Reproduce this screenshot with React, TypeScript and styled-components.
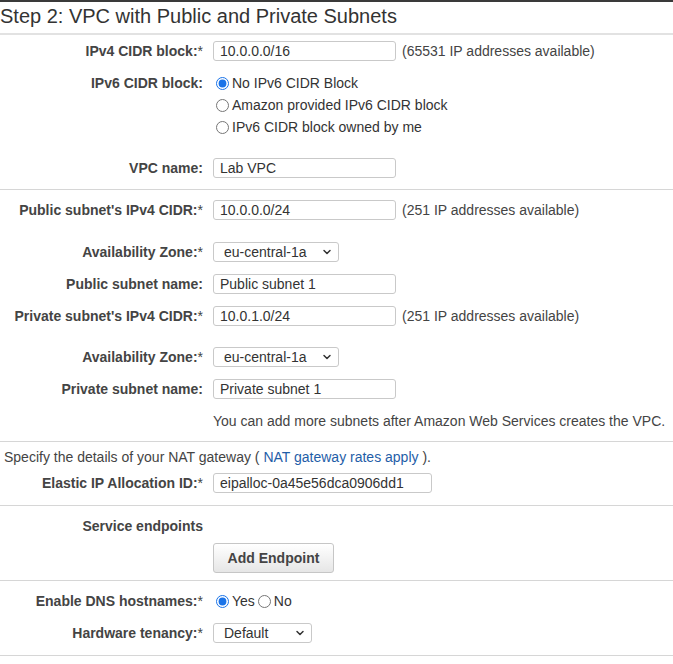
import React from "react";
import styled, { createGlobalStyle } from "styled-components";
import { ChevronDown } from "lucide-react";

const GlobalStyle = createGlobalStyle`
  html, body { margin: 0; padding: 0; background: #fff; }
  body {
    font-family: "Liberation Sans", Arial, sans-serif;
    font-size: 14px;
    color: #444;
  }
  * { box-sizing: border-box; }
`;

const Page = styled.div`
  width: 673px;
  border-top: 2px solid #3a3a3a;
`;

const Title = styled.h2`
  margin: 0;
  height: 33px;
  padding: 2px 0 0 0;
  font-size: 20px;
  font-weight: normal;
  line-height: 24px;
  color: #333;
  border-bottom: 2px solid #e2e2e2;
`;

const Section = styled.section<{ $pt?: number; $pb?: number }>`
  padding-top: ${(p) => p.$pt ?? 0}px;
  padding-bottom: ${(p) => p.$pb ?? 0}px;
  border-bottom: 1px solid #d6d6d6;
`;

const Row = styled.div<{ $h: number; $top?: boolean; $mt?: number }>`
  display: grid;
  grid-template-columns: 213px 1fr;
  align-items: ${(p) => (p.$top ? "start" : "center")};
  height: ${(p) => p.$h}px;
  margin-top: ${(p) => p.$mt ?? 0}px;
`;

const Label = styled.label`
  text-align: right;
  padding-right: 10px;
  font-weight: bold;
  white-space: nowrap;
  color: #444;
  line-height: 22px;
`;

const Star = styled.span`
  font-weight: normal;
`;

const Field = styled.div`
  display: flex;
  align-items: center;
  gap: 6px;
  white-space: nowrap;
`;

const TextInput = styled.input<{ $w: number }>`
  width: ${(p) => p.$w}px;
  height: 20px;
  border: 1px solid #c9c9c9;
  border-radius: 3px;
  padding: 0 6px;
  font-family: "Liberation Sans", Arial, sans-serif;
  font-size: 14px;
  color: #333;
  background: #fff;
  outline: none;
`;

const Help = styled.span`
  color: #444;
`;

const RadioList = styled.div`
  display: flex;
  flex-direction: column;
`;

const RadioLine = styled.label`
  display: flex;
  align-items: center;
  height: 22px;
  color: #333;
`;

const Radio = styled.input.attrs({ type: "radio" })`
  width: 13px;
  height: 13px;
  margin: 0 3px 0 3px;
  accent-color: #1a73e8;
`;

const SelectWrap = styled.div<{ $w: number }>`
  position: relative;
  width: ${(p) => p.$w}px;
  height: 20px;
`;

const Select = styled.select`
  appearance: none;
  width: 100%;
  height: 20px;
  border: 1px solid #c9c9c9;
  border-radius: 3px;
  padding: 0 0 0 10px;
  font-family: "Liberation Sans", Arial, sans-serif;
  font-size: 14px;
  color: #333;
  background: #fff;
  outline: none;
`;

const Chevron = styled.span`
  position: absolute;
  right: 6px;
  top: 4px;
  display: flex;
  pointer-events: none;
  color: #333;
`;

const Note = styled.div`
  padding-left: 4px;
  line-height: 26px;
  height: 26px;
  color: #444;
`;

const Link = styled.a`
  color: #1f5ea8;
  text-decoration: none;
`;

const Button = styled.button`
  width: 121px;
  height: 30px;
  border: 1px solid #c6c6c6;
  border-radius: 3px;
  background: linear-gradient(#ffffff, #e6e6e6);
  font-family: "Liberation Sans", Arial, sans-serif;
  font-size: 14px;
  font-weight: bold;
  color: #444;
  padding: 0;
`;

const Empty = styled.div``;

function Dropdown({ w, value }: { w: number; value: string }) {
  return (
    <SelectWrap $w={w}>
      <Select defaultValue={value}>
        <option>{value}</option>
      </Select>
      <Chevron>
        <ChevronDown size={12} strokeWidth={3} />
      </Chevron>
    </SelectWrap>
  );
}

export default function App() {
  return (
    <>
      <GlobalStyle />
      <Page>
        <Title>Step 2: VPC with Public and Private Subnets</Title>

        <Section $pb={6}>
          <Row $h={31}>
            <Label>
              IPv4 CIDR block:<Star>*</Star>
            </Label>
            <Field>
              <TextInput $w={183} defaultValue="10.0.0.0/16" />
              <Help>(65531 IP addresses available)</Help>
            </Field>
          </Row>
          <Row $h={66} $top $mt={6}>
            <Label>IPv6 CIDR block:</Label>
            <RadioList>
              <RadioLine>
                <Radio name="ipv6" defaultChecked />
                No IPv6 CIDR Block
              </RadioLine>
              <RadioLine>
                <Radio name="ipv6" />
                Amazon provided IPv6 CIDR block
              </RadioLine>
              <RadioLine>
                <Radio name="ipv6" />
                IPv6 CIDR block owned by me
              </RadioLine>
            </RadioList>
          </Row>
          <Row $h={30} $mt={15}>
            <Label>VPC name:</Label>
            <Field>
              <TextInput $w={183} defaultValue="Lab VPC" />
            </Field>
          </Row>
        </Section>

        <Section $pt={4} $pb={5}>
          <Row $h={32}>
            <Label>
              Public subnet's IPv4 CIDR:<Star>*</Star>
            </Label>
            <Field>
              <TextInput $w={183} defaultValue="10.0.0.0/24" />
              <Help>(251 IP addresses available)</Help>
            </Field>
          </Row>
          <Row $h={32} $mt={10}>
            <Label>
              Availability Zone:<Star>*</Star>
            </Label>
            <Field>
              <Dropdown w={126} value="eu-central-1a" />
            </Field>
          </Row>
          <Row $h={32}>
            <Label>Public subnet name:</Label>
            <Field>
              <TextInput $w={183} defaultValue="Public subnet 1" />
            </Field>
          </Row>
          <Row $h={31}>
            <Label>
              Private subnet's IPv4 CIDR:<Star>*</Star>
            </Label>
            <Field>
              <TextInput $w={183} defaultValue="10.0.1.0/24" />
              <Help>(251 IP addresses available)</Help>
            </Field>
          </Row>
          <Row $h={32} $mt={10}>
            <Label>
              Availability Zone:<Star>*</Star>
            </Label>
            <Field>
              <Dropdown w={126} value="eu-central-1a" />
            </Field>
          </Row>
          <Row $h={32}>
            <Label>Private subnet name:</Label>
            <Field>
              <TextInput $w={183} defaultValue="Private subnet 1" />
            </Field>
          </Row>
          <Row $h={31}>
            <Empty />
            <Help>You can add more subnets after Amazon Web Services creates the VPC.</Help>
          </Row>
        </Section>

        <Section $pt={2} $pb={9}>
          <Note>
            Specify the details of your NAT gateway ( <Link href="#">NAT gateway rates apply</Link> ).
          </Note>
          <Row $h={26}>
            <Label>
              Elastic IP Allocation ID:<Star>*</Star>
            </Label>
            <Field>
              <TextInput $w={219} defaultValue="eipalloc-0a45e56dca0906dd1" />
            </Field>
          </Row>
        </Section>

        <Section $pt={4} $pb={6}>
          <Row $h={32}>
            <Label>Service endpoints</Label>
            <Empty />
          </Row>
          <Row $h={32}>
            <Empty />
            <Field>
              <Button>Add Endpoint</Button>
            </Field>
          </Row>
        </Section>

        <Section $pt={4} $pb={6}>
          <Row $h={32}>
            <Label>
              Enable DNS hostnames:<Star>*</Star>
            </Label>
            <RadioLine>
              <Radio name="dns" defaultChecked />
              Yes
              <Radio name="dns" />
              No
            </RadioLine>
          </Row>
          <Row $h={32}>
            <Label>
              Hardware tenancy:<Star>*</Star>
            </Label>
            <Field>
              <Dropdown w={99} value="Default" />
            </Field>
          </Row>
        </Section>
      </Page>
    </>
  );
}
